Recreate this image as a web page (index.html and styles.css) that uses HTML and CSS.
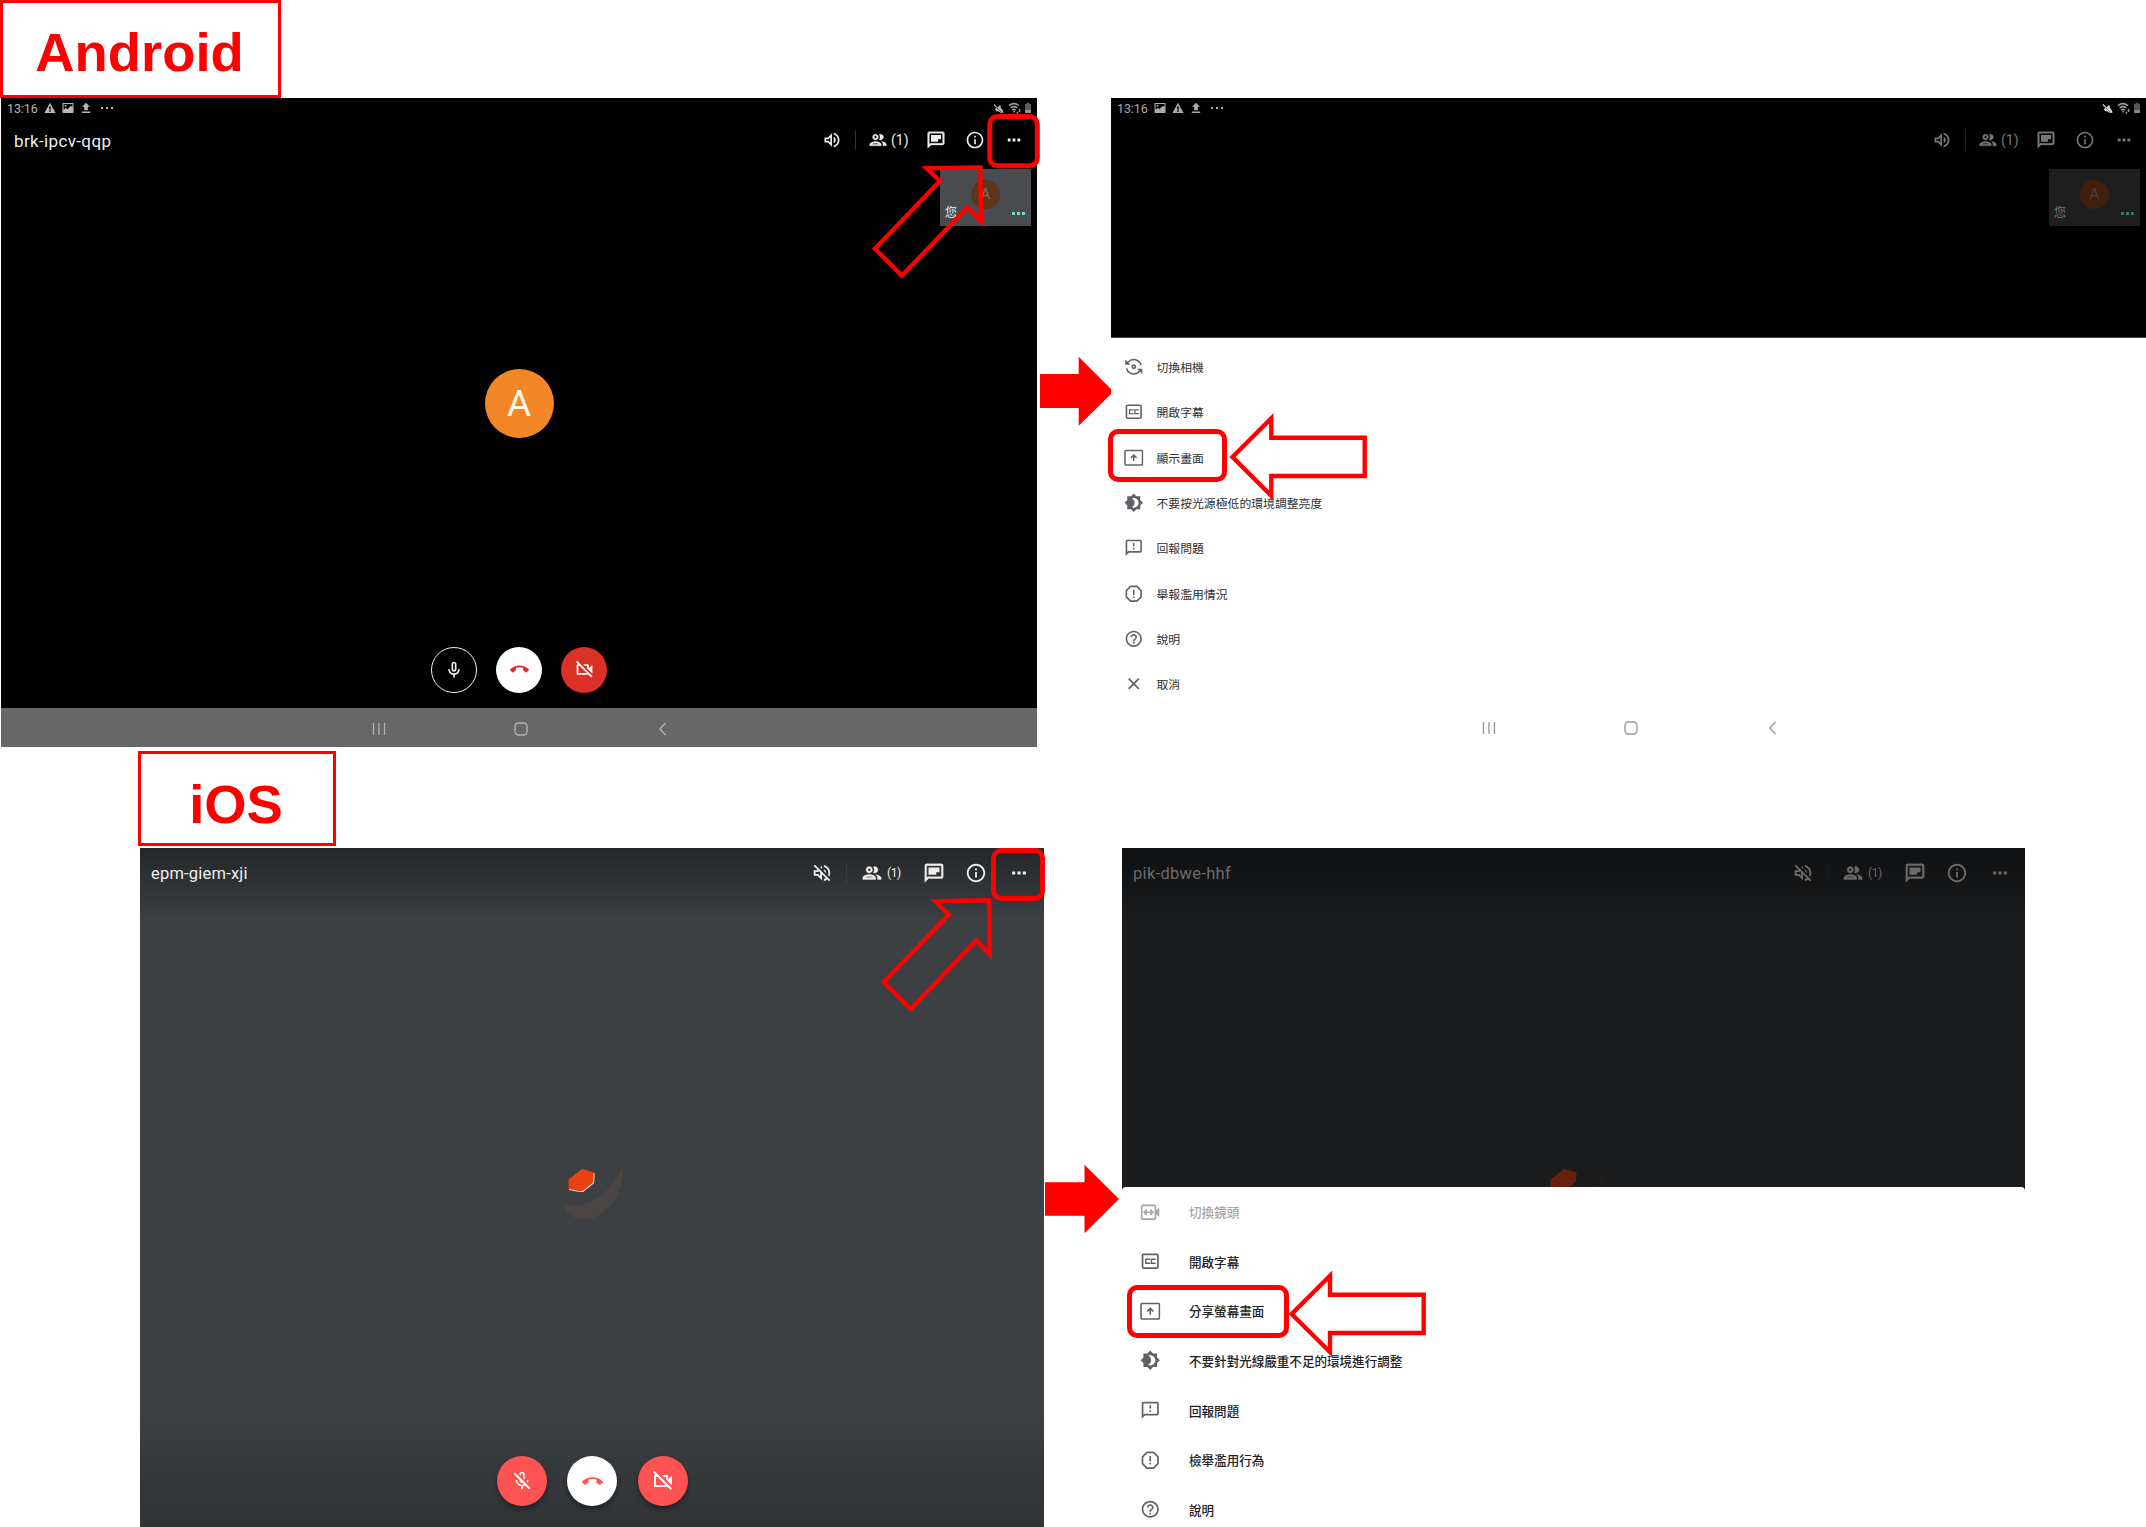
FILE: index.html
```html
<!DOCTYPE html>
<html lang="zh-Hant">
<head>
<meta charset="utf-8">
<title>Android / iOS</title>
<link rel="stylesheet" href="styles.css">
</head>
<body>
<svg class="defs" aria-hidden="true">
  <symbol id="volume" viewBox="0 0 24 24"><path d="M3 9v6h4l5 5V4L7 9H3zm7-.17v6.34L7.83 13H5v-2h2.83L10 8.83zM16.5 12c0-1.77-1.02-3.29-2.5-4.03v8.05c1.48-.73 2.5-2.25 2.5-4.02zM14 3.23v2.06c2.89.86 5 3.54 5 6.71s-2.11 5.85-5 6.71v2.06c4.01-.91 7-4.49 7-8.77s-2.99-7.86-7-8.77z"/></symbol>
  <symbol id="volume-off" viewBox="0 0 24 24"><path d="M4.34 2.93L2.93 4.34 7.29 8.7 7 9H3v6h4l5 5v-6.59l4.18 4.18c-.65.49-1.38.88-2.18 1.11v2.06c1.34-.3 2.57-.92 3.61-1.75l2.05 2.05 1.41-1.41L4.34 2.93zM10 15.17L7.83 13H5v-2h2.83l.88-.88L10 11.41v3.76zM19 12c0 .82-.15 1.61-.41 2.34l1.53 1.53c.56-1.17.88-2.48.88-3.87 0-4.28-2.99-7.86-7-8.77v2.06c2.89.86 5 3.54 5 6.71zm-7-8l-1.88 1.88L12 7.76zm4.5 8c0-1.77-1.02-3.29-2.5-4.03v1.79l2.48 2.48c.01-.08.02-.16.02-.24z"/></symbol>
  <symbol id="people" viewBox="0 0 24 24"><path d="M9 13.75c-2.34 0-7 1.17-7 3.5V19h14v-1.75c0-2.33-4.66-3.5-7-3.5zM4.34 17c.84-.58 2.87-1.25 4.66-1.25s3.82.67 4.66 1.25H4.34zM9 12c1.93 0 3.5-1.57 3.5-3.5S10.93 5 9 5 5.5 6.57 5.5 8.5 7.07 12 9 12zm0-5c.83 0 1.5.67 1.5 1.5S9.83 10 9 10s-1.5-.67-1.5-1.5S8.17 7 9 7zm7.04 6.81c1.16.84 1.96 1.96 1.96 3.44V19h4v-1.75c0-2.02-3.5-3.17-5.96-3.44zM15 12c1.93 0 3.5-1.57 3.5-3.5S16.93 5 15 5c-.54 0-1.04.13-1.5.35.63.89 1 1.98 1 3.15s-.37 2.26-1 3.15c.46.22.96.35 1.5.35z" stroke="currentColor" stroke-width=".4"/></symbol>
  <symbol id="chat" viewBox="0 0 24 24"><path d="M4 4h16v12H5.17L4 17.17V4m0-2c-1.1 0-1.99.9-1.99 2L2 22l4-4h14c1.1 0 2-.9 2-2V4c0-1.1-.9-2-2-2H4z" stroke="currentColor" stroke-width=".4"/><path d="M6 6h12v5.200h-3.500V14H6z"/></symbol>
  <symbol id="info" viewBox="0 0 24 24"><path d="M11 7h2v2h-2zm0 4h2v6h-2zm1-9C6.48 2 2 6.48 2 12s4.48 10 10 10 10-4.48 10-10S17.52 2 12 2zm0 18c-4.41 0-8-3.59-8-8s3.59-8 8-8 8 3.590 8 8-3.590 8-8 8z"/></symbol>
  <symbol id="more" viewBox="0 0 24 24"><path d="M4.500 10.300h3.400v3.400H4.500zM10.300 10.300h3.400v3.400h-3.400zM16.100 10.300h3.400v3.400h-3.400z"/></symbol>
  <symbol id="mic" viewBox="0 0 24 24"><path d="M12 14c1.66 0 3-1.34 3-3V5c0-1.66-1.34-3-3-3S9 3.34 9 5v6c0 1.66 1.34 3 3 3zm-1-9c0-.55.45-1 1-1s1 .45 1 1v6c0 .55-.45 1-1 1s-1-.45-1-1V5zm6 6c0 2.76-2.24 5-5 5s-5-2.24-5-5H5c0 3.53 2.61 6.43 6 6.92V21h2v-3.08c3.39-.49 6-3.39 6-6.92h-2z"/></symbol>
  <symbol id="mic-off" viewBox="0 0 24 24"><path d="M10.8 4.9c0-.66.54-1.2 1.2-1.2s1.2.54 1.2 1.2l-.01 3.91L15 10.6V5c0-1.66-1.34-3-3-3-1.54 0-2.79 1.16-2.96 2.65l1.76 1.76V4.9zM19 11h-1.7c0 .58-.1 1.13-.27 1.64l1.27 1.27c.44-.88.7-1.87.7-2.91zM4.41 2.86L3 4.27l6 6V11c0 1.66 1.34 3 3 3 .23 0 .44-.03.65-.08l1.66 1.66c-.71.33-1.5.52-2.31.52-2.76 0-5.3-2.1-5.3-5.1H5c0 3.41 2.72 6.23 6 6.72V21h2v-3.28c.91-.13 1.77-.45 2.55-.9l4.2 4.2 1.41-1.41L4.41 2.86z"/></symbol>
  <symbol id="hangup" viewBox="0 0 24 24"><path d="M12 9c-1.6 0-3.15.25-4.6.72v3.1c0 .39-.23.74-.56.9-.98.49-1.87 1.12-2.66 1.85-.18.18-.43.28-.7.28-.28 0-.53-.11-.71-.29L.29 13.08c-.18-.17-.29-.42-.29-.7 0-.28.11-.53.29-.71C3.34 8.78 7.46 7 12 7s8.66 1.78 11.71 4.67c.18.18.29.43.29.71 0 .28-.11.53-.29.71l-2.48 2.48c-.18.18-.43.29-.71.29-.27 0-.52-.11-.7-.28-.79-.74-1.69-1.36-2.67-1.85-.33-.16-.56-.5-.56-.9v-3.1C15.15 9.25 13.6 9 12 9z"/></symbol>
  <symbol id="cam-off" viewBox="0 0 24 24"><path d="M9.56 8l-2-2-4.15-4.14L2 3.27 4.73 6H4c-.55 0-1 .45-1 1v10c0 .55.45 1 1 1h12c.21 0 .39-.08.55-.18L19.73 21l1.41-1.41-8.86-8.86L9.56 8zM5 16V8h1.73l8 8H5zm10-8v2.61l6 6V6.5l-4 4V7c0-.55-.45-1-1-1h-5.61l2 2H15z"/></symbol>
  <symbol id="warning" viewBox="0 0 12 12"><path fill-rule="evenodd" d="M6 .8L11.6 11H.4zM5.2 4.4v3h1.6v-3zM5.2 8.3v1.5h1.6V8.3z"/></symbol>
  <symbol id="image" viewBox="0 0 12 12"><path fill-rule="evenodd" d="M.5 1h11v10H.5zM1.6 2.1v5.6l2.2-1.9 1.7 1.4 3.3-3.4 1.6 1.2V2.1zM2.6 3h1.8v1.6H2.6z"/></symbol>
  <symbol id="upload" viewBox="0 0 12 12"><path d="M6 .8l4 4H7.8v3.4H4.2V4.8H2zM1.8 9.5h8.4V11H1.8z"/></symbol>
  <symbol id="status-mute" viewBox="0 0 12 12"><path d="M2 6.500l2.500-1.200L8 2l.6 3.200 2.400 3.300.3 2.500-2.600-.2L6 9.200 3.200 8.600z"/><path d="M.8 2.200l9.700 9" stroke="#000" stroke-width=".6"/><path d="M1 1.600l3.400 3.400" stroke="currentColor" stroke-width="1.400"/></symbol>
  <symbol id="wifi" viewBox="0 0 12 12"><path d="M.8 3.3Q5.5-.2 10.2 3.3M2.4 5.4q3.1-2.3 6.2 0M3.9 7.4q1.6-1.2 3.2 0" fill="none" stroke="currentColor" stroke-width="1.500"/><path d="M5 8.3h1.500v1.500H5zM8 9h1.400v1.800H8zM10 6.500h1.400v2.800H10z"/></symbol>
  <symbol id="battery" viewBox="0 0 8 12"><path d="M2.6.8h2.8V2H7v5.7H1V2h1.6z" opacity=".5"/><path d="M1 7.8h6V11H1z" opacity=".8"/></symbol>
  <symbol id="flip" viewBox="0 0 24 24"><g fill="none" stroke="currentColor" stroke-width="2"><path d="M5 6.500A9 9 0 0 1 20.800 10M19 17.500A9 9 0 0 1 3.200 14"/><circle cx="12" cy="12" r="2"/></g><path d="M1.500 3v6.500H8zM22.500 21v-6.500H16z"/></symbol>
  <symbol id="cc" viewBox="0 0 24 24"><g fill="none" stroke="currentColor" stroke-width="2"><rect x="3" y="4" width="18" height="16" rx="1.2"/><path stroke-width="1.6" d="M11 10.5V9.6H6.8v4.8H11v-.9M17.500 10.500V9.600h-4.200v4.800h4.200v-.9"/></g></symbol>
  <symbol id="present" viewBox="0 0 24 24"><g fill="none" stroke="currentColor" stroke-width="1.9"><rect x="1.2" y="3" width="21.6" height="18" rx="1"/><path d="M12 16V9M8.500 12.200L12 8.700l3.500 3.500"/></g></symbol>
  <symbol id="brightness" viewBox="0 0 24 24"><path d="M20 8.69V4h-4.69L12 .69 8.69 4H4v4.69L.69 12 4 15.31V20h4.69L12 23.31 15.31 20H20v-4.69L23.31 12 20 8.69zM12 18c-.89 0-1.74-.2-2.5-.55C11.56 16.5 13 14.42 13 12s-1.44-4.5-3.5-5.45C10.26 6.2 11.11 6 12 6c3.31 0 6 2.69 6 6s-2.69 6-6 6z"/></symbol>
  <symbol id="feedback" viewBox="0 0 24 24"><path d="M20 2H4c-1.1 0-1.99.9-1.99 2L2 22l4-4h14c1.1 0 2-.9 2-2V4c0-1.1-.9-2-2-2zm0 14H5.17L4 17.17V4h16v12zM11 12h2v2h-2zm0-6h2v4h-2z"/></symbol>
  <symbol id="report" viewBox="0 0 24 24"><path d="M8.1 2.9h7.8l5.2 5.2v7.8l-5.2 5.2H8.1l-5.2-5.2V8.1z" fill="none" stroke="currentColor" stroke-width="2" stroke-linejoin="round"/><path d="M11 7h2v6.5h-2zM11 15h2v2h-2z"/></symbol>
  <symbol id="help" viewBox="0 0 24 24"><path d="M11 18h2v-2h-2v2zm1-16C6.48 2 2 6.48 2 12s4.48 10 10 10 10-4.48 10-10S17.52 2 12 2zm0 18c-4.41 0-8-3.59-8-8s3.59-8 8-8 8 3.59 8 8-3.59 8-8 8zm0-14c-2.21 0-4 1.79-4 4h2c0-1.1.9-2 2-2s2 .9 2 2c0 2-3 1.75-3 5h2c0-2.25 3-2.5 3-5 0-2.21-1.79-4-4-4z"/></symbol>
  <symbol id="close" viewBox="0 0 24 24"><path d="M19 6.41L17.59 5 12 10.59 6.41 5 5 6.41 10.59 12 5 17.59 6.41 19 12 13.41 17.59 19 19 17.59 13.41 12z"/></symbol>
  <symbol id="switch-cam" viewBox="0 0 24 24"><g fill="none" stroke="currentColor" stroke-width="1.9"><rect x="2" y="4" width="16" height="16" rx="1"/><path d="M5 12h10M8 9l-3 3 3 3M12 9l3 3-3 3"/></g><path d="M18 10.5l4.5-4v11l-4.5-4z"/></symbol>
  <symbol id="avatar-art" viewBox="0 0 62 54"><path d="M0 38Q39 44 61 0Q62 18 52 34Q37 53 21 53Q9 52 0 38z" fill="#4b4644"/><path d="M6.500 12.500L20 2l12.500 3.500-.5 9L20.500 24.500 6.500 22z" fill="#ea4215"/><path d="M7 22.500l9 1.800 5 .2 10.500-8.500.7-9.500" fill="none" stroke="#fbd3c8" stroke-width="1.100"/></symbol>
  <symbol id="avatar-art-dim" viewBox="0 0 62 54"><path d="M0 38Q39 44 61 0Q62 18 52 34Q37 53 21 53Q9 52 0 38z" fill="#1e1c1c"/><path d="M6.500 12.500L20 2l12.500 3.500-.5 9L20.500 24.500 6.500 22z" fill="#66200c"/></symbol>
  <symbol id="recents" viewBox="0 0 14 14"><path d="M1.500 1v12M7 1v12M12.500 1v12" fill="none" stroke="currentColor" stroke-width="1.300"/></symbol>
  <symbol id="home" viewBox="0 0 14 14"><rect x="1" y="1" width="12" height="12" rx="3.500" fill="none" stroke="currentColor" stroke-width="1.400"/></symbol>
  <symbol id="back" viewBox="0 0 14 14"><path d="M9.500 1L4 7l5.500 6" fill="none" stroke="currentColor" stroke-width="1.400"/></symbol>
</svg>

<main class="page">
  <section class="android">
    <h1 class="label label-android">Android</h1>
    <div class="screens">
      <article class="screen a-screen">
        <div class="status">
          <span class="clock">13:16</span>
          <svg class="st"><use href="#warning"/></svg>
          <svg class="st"><use href="#image"/></svg>
          <svg class="st"><use href="#upload"/></svg>
          <span class="st-dots"><i></i><i></i><i></i></span>
          <span class="st-right">
            <svg class="s-mute"><use href="#status-mute"/></svg>
            <svg class="s-wifi"><use href="#wifi"/></svg>
            <svg class="s-batt"><use href="#battery"/></svg>
          </span>
        </div>
        <header class="bar a-bar">
          <span class="code a-code1">brk-ipcv-qqp</span>
          <svg class="ic"><use href="#volume"/></svg>
          <span class="divider"></span>
          <svg class="ic"><use href="#people"/></svg>
          <span class="count">(1)</span>
          <svg class="ic chat"><use href="#chat"/></svg>
          <svg class="ic info"><use href="#info"/></svg>
          <svg class="ic more"><use href="#more"/></svg>
        </header>
        <div class="self">
          <span class="self-avatar">A</span>
          <div class="self-foot"><span>您</span><span class="self-dots"><i></i><i></i><i></i></span></div>
        </div>
        <div class="avatar">A</div>
        <div class="controls a-controls">
          <span class="btn outline"><svg class="c20"><use href="#mic"/></svg></span>
          <span class="btn white"><svg class="c19"><use href="#hangup"/></svg></span>
          <span class="btn red"><svg class="c21"><use href="#cam-off"/></svg></span>
        </div>
        <nav class="nav">
          <svg><use href="#recents"/></svg><svg><use href="#home"/></svg><svg><use href="#back"/></svg>
        </nav>
      </article>

      <article class="screen a-sheet-screen">
        <div class="dim">
          <div class="status">
            <span class="clock">13:16</span>
            <svg class="st"><use href="#image"/></svg>
            <svg class="st"><use href="#warning"/></svg>
            <svg class="st"><use href="#upload"/></svg>
            <span class="st-dots"><i></i><i></i><i></i></span>
            <span class="st-right">
              <svg class="s-mute"><use href="#status-mute"/></svg>
              <svg class="s-wifi"><use href="#wifi"/></svg>
              <svg class="s-batt"><use href="#battery"/></svg>
            </span>
          </div>
          <header class="bar a-bar">
            <span class="code"></span>
            <svg class="ic"><use href="#volume"/></svg>
            <span class="divider"></span>
            <svg class="ic"><use href="#people"/></svg>
            <span class="count">(1)</span>
            <svg class="ic chat"><use href="#chat"/></svg>
            <svg class="ic info"><use href="#info"/></svg>
            <svg class="ic more"><use href="#more"/></svg>
          </header>
          <div class="self">
            <span class="self-avatar">A</span>
            <div class="self-foot"><span>您</span><span class="self-dots"><i></i><i></i><i></i></span></div>
          </div>
        </div>
        <ul class="menu a-menu">
          <li><svg><use href="#flip"/></svg>切換相機</li>
          <li><svg><use href="#cc"/></svg>開啟字幕</li>
          <li><svg><use href="#present"/></svg>顯示畫面</li>
          <li><svg><use href="#brightness"/></svg>不要按光源極低的環境調整亮度</li>
          <li><svg><use href="#feedback"/></svg>回報問題</li>
          <li><svg><use href="#report"/></svg>舉報濫用情況</li>
          <li><svg><use href="#help"/></svg>說明</li>
          <li><svg><use href="#close"/></svg>取消</li>
        </ul>
        <nav class="nav nav-light">
          <svg><use href="#recents"/></svg><svg><use href="#home"/></svg><svg><use href="#back"/></svg>
        </nav>
      </article>
    </div>
  </section>

  <section class="ios">
    <h1 class="label label-ios">iOS</h1>
    <div class="screens">
      <article class="screen i-screen">
        <header class="bar i-bar">
          <span class="code i-code1">epm-giem-xji</span>
          <svg class="ic"><use href="#volume-off"/></svg>
          <span class="divider"></span>
          <svg class="ic"><use href="#people"/></svg>
          <span class="count">(1)</span>
          <svg class="ic chat"><use href="#chat"/></svg>
          <svg class="ic info"><use href="#info"/></svg>
          <svg class="ic more"><use href="#more"/></svg>
        </header>
        <svg class="art"><use href="#avatar-art"/></svg>
        <div class="controls i-controls">
          <span class="btn coral"><svg class="c22"><use href="#mic-off"/></svg></span>
          <span class="btn white"><svg class="c21"><use href="#hangup"/></svg></span>
          <span class="btn coral"><svg class="c24"><use href="#cam-off"/></svg></span>
        </div>
      </article>

      <article class="screen i-sheet-screen">
        <div class="i-dim">
          <header class="bar i-bar">
            <span class="code i-code2">pik-dbwe-hhf</span>
            <svg class="ic"><use href="#volume-off"/></svg>
            <span class="divider"></span>
            <svg class="ic"><use href="#people"/></svg>
            <span class="count">(1)</span>
            <svg class="ic chat"><use href="#chat"/></svg>
            <svg class="ic info"><use href="#info"/></svg>
            <svg class="ic more"><use href="#more"/></svg>
          </header>
          <svg class="art"><use href="#avatar-art-dim"/></svg>
        </div>
        <ul class="menu i-menu">
          <li class="disabled"><svg><use href="#switch-cam"/></svg>切換鏡頭</li>
          <li><svg><use href="#cc"/></svg>開啟字幕</li>
          <li><svg><use href="#present"/></svg>分享螢幕畫面</li>
          <li><svg><use href="#brightness"/></svg>不要針對光線嚴重不足的環境進行調整</li>
          <li><svg><use href="#feedback"/></svg>回報問題</li>
          <li><svg><use href="#report"/></svg>檢舉濫用行為</li>
          <li><svg><use href="#help"/></svg>說明</li>
        </ul>
      </article>
    </div>
  </section>

  <svg class="marks" viewBox="0 0 2146 1527">
    <g class="solid">
      <path d="M1040 374h38.700v-17.300L1111 389v5l-32.300 31.700V408H1040z"/>
      <path d="M1045 1182.300h39.500v-17.600L1119 1199l-34.500 34.300v-17.600H1045z"/>
    </g>
    <g class="ring">
      <rect x="989.800" y="116.500" width="47.500" height="49.300" rx="7.500"/>
      <rect x="1110.500" y="431.500" width="114" height="48" rx="7.500"/>
      <rect x="993.500" y="850.500" width="49" height="48" rx="7.500"/>
      <rect x="1129.500" y="1287.500" width="157" height="48" rx="7.500"/>
    </g>
    <g class="arrow">
      <path d="M926.700 168.300L980.300 167.500 981 221.500 967.500 207.500 902 275.500 875 248.700 940 181z"/>
      <path d="M935.300 901.300L989 900.300 989.800 954.300 976 940.700 910.700 1009 883.700 982.300 948.700 914.700z"/>
      <path d="M1232.500 457l38.800-38.700v19.400h93.400V476h-93.400v19.700z"/>
      <path d="M1291.700 1314l38.300-38.300v19h93.700v38.300H1330v19z"/>
    </g>
  </svg>
</main>
</body>
</html>
```
FILE: styles.css
```css
* { box-sizing: border-box; }
body { margin: 0; background: #fff; font-family: Roboto, "Noto Sans CJK TC", sans-serif; }
svg { display: block; flex: none; fill: currentColor; }
.defs { position: absolute; width: 0; height: 0; }
.page { position: relative; width: 2146px; height: 1527px; overflow: hidden; }
.marks { position: absolute; inset: 0; width: 2146px; height: 1527px; fill: none; }
.solid { fill: #f00; }
.ring { stroke: #f00; stroke-width: 5; }
.arrow { stroke: #f00; stroke-width: 4.400; stroke-miterlimit: 10; }

.label {
  margin: 0;
  display: flex;
  align-items: center;
  justify-content: center;
  border: 3px solid #f00;
  color: #f00;
  background: #fff;
  font: bold 54.400px/60px "Liberation Sans", Arial, sans-serif;
}
.label-android { width: 281px; height: 98px; padding: 8px 2px 0 0; }
.label-ios { width: 198px; height: 95px; margin: 0 0 2px 138px; padding: 13px 2px 0 0; }

.android { height: 747px; }
.ios { height: 780px; padding-top: 4px; }
.screens { display: flex; }
.screen { display: flex; flex-direction: column; flex: none; overflow: hidden; }
.android .screen { height: 649px; }
.a-screen { width: 1036px; margin-left: 1px; background: #000; }
.a-sheet-screen { width: 1035px; margin-left: 74px; }
.ios .screen { height: 679px; }
.i-screen {
  width: 904px;
  margin-left: 140px;
  background: linear-gradient(#242628, #3c4043 72px, #3c4043 565px, #303236 675px);
}
.i-sheet-screen { width: 903px; margin-left: 78px; }

.status { display: flex; align-items: center; height: 20px; padding: 0 5px 0 6px; color: #b8b8b8; }
.clock { width: 37px; font-size: 12.500px; letter-spacing: -.1px; }
.st { width: 12px; height: 12px; margin-right: 6px; }
.st-dots { display: flex; gap: 3px; margin-left: 3px; }
.st-dots i { width: 2px; height: 2px; background: currentColor; }
.st-right { display: flex; align-items: center; margin-left: auto; }
.s-mute { width: 11px; height: 11px; margin-right: 4px; }
.s-wifi { width: 13px; height: 13px; margin-right: 3px; color: #999; }
.s-batt { width: 8px; height: 12px; }

.bar { display: flex; align-items: center; color: #eee; }
.code { margin-right: auto; white-space: nowrap; }
.a-bar { height: 44px; padding: 0 13px 0 13px; }
.a-code1 { font-size: 17px; letter-spacing: .36px; padding-top: 1px; }
.ic { width: 20px; height: 20px; }
.divider { width: 1px; height: 20px; background: #333; margin: 0 12px 0 13px; }
.count { font-size: 14px; margin-left: 3px; width: 19px; white-space: nowrap; }
.chat { margin-left: 16px; }
.info { margin-left: 19px; }
.more { margin-left: 19px; }

.self {
  display: flex;
  flex-direction: column;
  align-items: center;
  align-self: flex-end;
  width: 91px;
  height: 57px;
  margin: 7px 6px 0 0;
  background: #4a4b4f;
}
.self-avatar {
  width: 29px;
  height: 29px;
  margin-top: 11px;
  border-radius: 50%;
  background: #5c351b;
  color: #7a7068;
  font-size: 15px;
  line-height: 29px;
  text-align: center;
}
.self-foot {
  display: flex;
  align-items: center;
  justify-content: space-between;
  align-self: stretch;
  height: 14px;
  margin-top: -3px;
  padding: 0 6px 0 5px;
  color: #eee;
  font-size: 12px;
  line-height: 14px;
}
.self-dots { display: flex; gap: 2px; }
.self-dots i { width: 3px; height: 3px; background: #74dcc6; }
.avatar {
  align-self: center;
  width: 69px;
  height: 69px;
  margin-top: 143px;
  border-radius: 50%;
  background: #f38727;
  color: #fffbe8;
  font-size: 37px;
  line-height: 70px;
  text-align: center;
}
.controls { display: flex; justify-content: center; }
.btn { display: flex; align-items: center; justify-content: center; border-radius: 50%; }
.a-controls { gap: 19px; margin-top: 208.500px; }
.a-controls .btn { width: 46px; height: 46px; }
.outline { border: 1.500px solid #eee; color: #eee; }
.white { background: #fff; color: #d93025; }
.red { background: #db3026; color: #fff; }
.c19 { width: 19px; height: 19px; }
.c20 { width: 20px; height: 20px; }
.c21 { width: 21px; height: 21px; }
.c22 { width: 22px; height: 22px; }
.c24 { width: 24px; height: 24px; }
.nav {
  display: flex;
  align-items: center;
  gap: 128px;
  height: 39px;
  margin-top: auto;
  padding: 2px 0 0 371px;
  background: #676767;
  color: #b4b4b4;
}
.nav svg { width: 14px; height: 14px; }
.nav-light { background: #fff; color: #999; padding-top: 1px; }

.dim { height: 240px; background: #000; border-bottom: 1px solid #444; display: flex; flex-direction: column; flex: none; }
.dim .status { padding-right: 5px; color: #aaa; }
.dim .status .s-mute { color: #ddd; }
.dim .bar { color: #777; padding-right: 12px; }
.dim .self { background: #1e1e1e; margin-right: 6px; }
.dim .self-avatar { background: #40200c; color: #533b30; }
.dim .self-foot { color: #777; }
.dim .self-dots i { background: #31786a; }
.dim .divider { background: #222; }

.menu { list-style: none; margin: 0; padding: 0; }
.menu li { display: flex; align-items: center; white-space: nowrap; }
.menu svg { color: #5f6368; }
.a-menu { padding: 5.900px 0 0 13px; color: #303030; font-size: 11.850px; }
.a-menu li { height: 45.350px; gap: 13px; }
.a-menu svg { width: 19.500px; height: 19.500px; }

.i-bar { height: 50px; padding: 0 14px 0 11px; }
.i-bar .ic { width: 22px; height: 22px; }
.i-bar .divider { margin: 0 14px 0 13px; background: #3a3c3e; height: 21px; }
.i-bar .count { font-size: 12px; width: 16px; margin-left: 4px; letter-spacing: -.4px; }
.i-bar .chat { margin-left: 20px; }
.i-bar .info { margin-left: 20px; }
.i-bar .more { margin-left: 21px; }
.i-code1 { font-size: 16.500px; letter-spacing: .2px; padding-top: 1px; }
.i-code2 { font-size: 16.500px; letter-spacing: .3px; padding-top: 1px; }
.art { width: 62px; height: 54px; margin: 269px 0 0 422px; }
.i-controls { gap: 20.500px; margin-top: 235px; }
.i-controls .btn { width: 50px; height: 50px; box-shadow: 0 3px 5px rgba(0, 0, 0, .35); }
.i-controls .white { color: #ff5252; }
.coral { background: #ff5252; color: #fff; }
.i-dim {
  height: 343px;
  flex: none;
  overflow: hidden;
  background: linear-gradient(#0f1011, #1a1b1d 72px);
}
.i-dim .bar { color: #6c6c6c; }
.i-dim .divider { background: #1c1c1e; }
.i-menu {
  position: relative;
  margin-top: -4px;
  padding: 0 0 0 18px;
  background: #fff;
  border-radius: 4px 4px 0 0;
  color: #202124;
  font-size: 12.550px;
  font-weight: 500;
}
.i-menu li { height: 49.600px; gap: 28.500px; }
.i-menu svg { width: 20.500px; height: 20.500px; }
.i-menu .disabled, .i-menu .disabled svg { color: #a5a5a5; }
```
